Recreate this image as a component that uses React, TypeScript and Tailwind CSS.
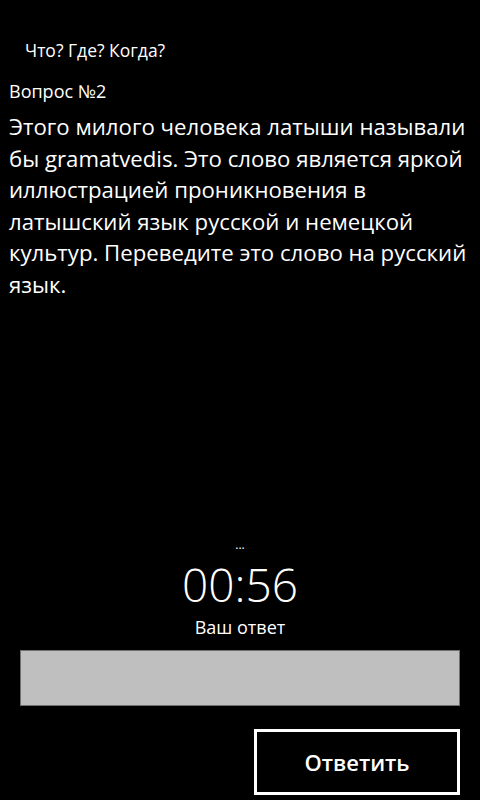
export default function App() {
  return (
    <div
      className="flex h-[800px] w-[480px] flex-col bg-black text-white"
      style={{ fontFamily: '"Open Sans", "Noto Sans", sans-serif' }}
    >
      <div className="pl-[25px] pt-[38px] text-[17.5px] leading-[24px]">Что? Где? Когда?</div>
      <div className="pl-[9px] pt-[17px] text-[18px] leading-[24px]">Вопрос №2</div>
      <p className="pl-[9px] pr-[8px] pt-[8px] text-[22.2px] leading-[31.5px]">
        Этого милого человека латыши называли бы gramatvedis. Это слово является яркой
        иллюстрацией проникновения в латышский язык русской и немецкой культур. Переведите
        это слово на русский язык.
      </p>
      <div className="flex-1" />
      <div className="flex flex-col items-center">
        <div className="text-[12px] leading-[10px]">...</div>
        <div className="mt-[10px] text-[46px] font-light leading-[48px]">00:56</div>
        <div className="mt-[8px] text-[18px] leading-[22px]">Ваш ответ</div>
      </div>
      <div className="mx-[20px] mt-[12px] h-[56px] border border-[#707070] bg-[#bfbfbf]" />
      <div className="flex justify-end pr-[20px] pt-[23px] pb-[5px]">
        <button className="flex h-[66px] w-[206px] items-center justify-center border-[3px] border-white text-[22px] font-semibold">
          Ответить
        </button>
      </div>
    </div>
  );
}
